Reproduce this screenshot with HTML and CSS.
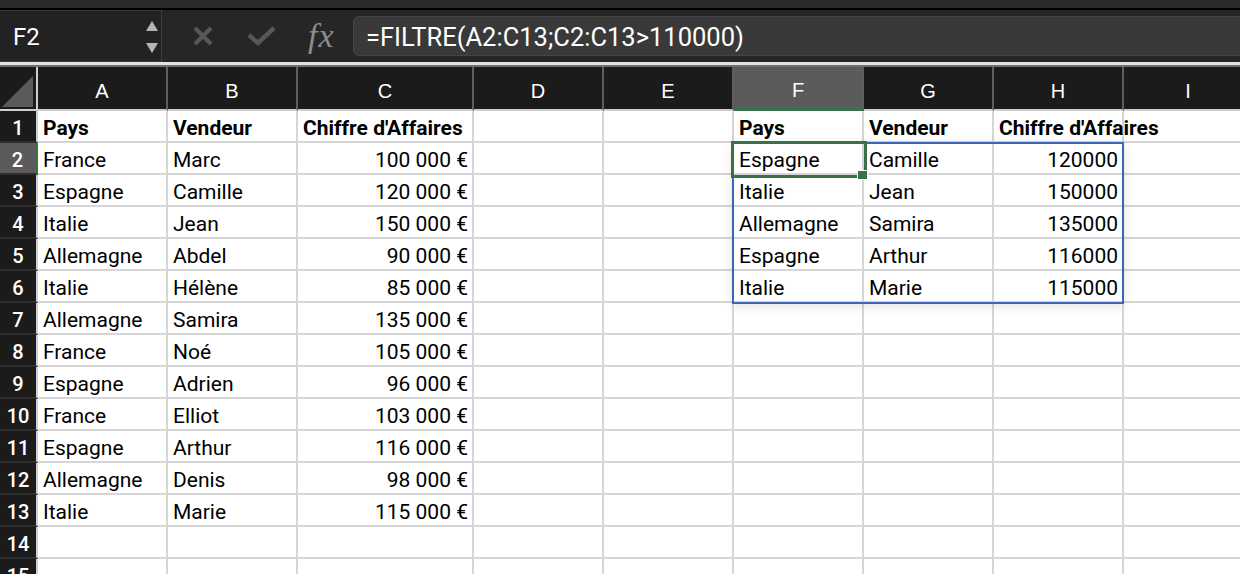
FILE: index.html
```html
<!DOCTYPE html>
<html lang="fr">
<head>
  <meta charset="UTF-8" />
  <title>Classeur - FILTRE</title>
  <link rel="stylesheet" href="styles.css">
</head>
<body>

<!-- TOP STRIP -->
<div class="top-strip"></div>

<!-- FORMULA BAR -->
<div class="formula-bar">
  <div class="name-box">
    <span class="name">F2</span>
    <div class="spinner">
      <svg width="14" height="34" viewBox="0 0 14 34">
        <polygon points="7,1 13,11 1,11" fill="#b5b5b5"/>
        <polygon points="1,23 13,23 7,33" fill="#b5b5b5"/>
      </svg>
    </div>
  </div>
  <div class="bar-icons">
    <svg class="icon-x" width="22" height="20" viewBox="0 0 22 20">
      <path d="M3 2 L19 18 M19 2 L3 18" stroke="#575757" stroke-width="4" stroke-linecap="butt"/>
    </svg>
    <svg class="icon-check" width="30" height="20" viewBox="0 0 30 20">
      <path d="M2 9 L11 17 L27 2" stroke="#575757" stroke-width="4.5" fill="none"/>
    </svg>
    <span class="fx">fx</span>
  </div>
  <div class="formula-input">=FILTRE(A2:C13;C2:C13&gt;110000)</div>
</div>

<div class="bar-sep"></div>

<!-- SHEET -->
<div class="sheet">
  <!-- column headers -->
  <div class="corner"><div class="corner-tri"></div></div>
  <div class="ch">A</div><div class="ch">B</div><div class="ch">C</div><div class="ch">D</div><div class="ch">E</div>
  <div class="ch active">F</div><div class="ch">G</div><div class="ch">H</div><div class="ch">I</div>

  <!-- row 1 -->
  <div class="rh">1</div>
  <div class="c b">Pays</div><div class="c b">Vendeur</div><div class="c b">Chiffre d'Affaires</div><div class="c"></div><div class="c"></div>
  <div class="c b">Pays</div><div class="c b">Vendeur</div><div class="c b">Chiffre d'Affaires</div><div class="c"></div>

  <!-- row 2 -->
  <div class="rh active">2</div>
  <div class="c">France</div><div class="c">Marc</div><div class="c n">100 000 €</div><div class="c"></div><div class="c"></div>
  <div class="c">Espagne</div><div class="c">Camille</div><div class="c n">120000</div><div class="c"></div>

  <!-- row 3 -->
  <div class="rh">3</div>
  <div class="c">Espagne</div><div class="c">Camille</div><div class="c n">120 000 €</div><div class="c"></div><div class="c"></div>
  <div class="c">Italie</div><div class="c">Jean</div><div class="c n">150000</div><div class="c"></div>

  <!-- row 4 -->
  <div class="rh">4</div>
  <div class="c">Italie</div><div class="c">Jean</div><div class="c n">150 000 €</div><div class="c"></div><div class="c"></div>
  <div class="c">Allemagne</div><div class="c">Samira</div><div class="c n">135000</div><div class="c"></div>

  <!-- row 5 -->
  <div class="rh">5</div>
  <div class="c">Allemagne</div><div class="c">Abdel</div><div class="c n">90 000 €</div><div class="c"></div><div class="c"></div>
  <div class="c">Espagne</div><div class="c">Arthur</div><div class="c n">116000</div><div class="c"></div>

  <!-- row 6 -->
  <div class="rh">6</div>
  <div class="c">Italie</div><div class="c">Hélène</div><div class="c n">85 000 €</div><div class="c"></div><div class="c"></div>
  <div class="c">Italie</div><div class="c">Marie</div><div class="c n">115000</div><div class="c"></div>

  <!-- row 7 -->
  <div class="rh">7</div>
  <div class="c">Allemagne</div><div class="c">Samira</div><div class="c n">135 000 €</div><div class="c"></div><div class="c"></div>
  <div class="c"></div><div class="c"></div><div class="c"></div><div class="c"></div>

  <!-- row 8 -->
  <div class="rh">8</div>
  <div class="c">France</div><div class="c">Noé</div><div class="c n">105 000 €</div><div class="c"></div><div class="c"></div>
  <div class="c"></div><div class="c"></div><div class="c"></div><div class="c"></div>

  <!-- row 9 -->
  <div class="rh">9</div>
  <div class="c">Espagne</div><div class="c">Adrien</div><div class="c n">96 000 €</div><div class="c"></div><div class="c"></div>
  <div class="c"></div><div class="c"></div><div class="c"></div><div class="c"></div>

  <!-- row 10 -->
  <div class="rh">10</div>
  <div class="c">France</div><div class="c">Elliot</div><div class="c n">103 000 €</div><div class="c"></div><div class="c"></div>
  <div class="c"></div><div class="c"></div><div class="c"></div><div class="c"></div>

  <!-- row 11 -->
  <div class="rh">11</div>
  <div class="c">Espagne</div><div class="c">Arthur</div><div class="c n">116 000 €</div><div class="c"></div><div class="c"></div>
  <div class="c"></div><div class="c"></div><div class="c"></div><div class="c"></div>

  <!-- row 12 -->
  <div class="rh">12</div>
  <div class="c">Allemagne</div><div class="c">Denis</div><div class="c n">98 000 €</div><div class="c"></div><div class="c"></div>
  <div class="c"></div><div class="c"></div><div class="c"></div><div class="c"></div>

  <!-- row 13 -->
  <div class="rh">13</div>
  <div class="c">Italie</div><div class="c">Marie</div><div class="c n">115 000 €</div><div class="c"></div><div class="c"></div>
  <div class="c"></div><div class="c"></div><div class="c"></div><div class="c"></div>

  <!-- row 14 -->
  <div class="rh">14</div>
  <div class="c"></div><div class="c"></div><div class="c"></div><div class="c"></div><div class="c"></div>
  <div class="c"></div><div class="c"></div><div class="c"></div><div class="c"></div>

  <!-- row 15 -->
  <div class="rh">15</div>
  <div class="c"></div><div class="c"></div><div class="c"></div><div class="c"></div><div class="c"></div>
  <div class="c"></div><div class="c"></div><div class="c"></div><div class="c"></div>

  <!-- overlays: spill range + active cell -->
  <div class="spill"></div>
  <div class="selection"></div>
  <div class="handle"></div>
</div>

</body>
</html>
```

FILE: styles.css
```css
* {
  box-sizing: border-box;
  margin: 0;
  padding: 0;
}
body {
  font-family: Roboto, "Liberation Sans", sans-serif;
  background-color: #fff;
  color: #000;
  width: 1240px;
  height: 574px;
  overflow: hidden;
}

/* TOP STRIP */
.top-strip {
  height: 10px;
  background-color: #2b2b2b;
  border-bottom: 2px solid #000;
}

/* FORMULA BAR */
.formula-bar {
  display: flex;
  align-items: center;
  height: 52px;
  background-color: #262626;
}
.name-box {
  display: flex;
  align-items: center;
  justify-content: space-between;
  width: 162px;
  height: 52px;
  padding: 2px 2px 0 13px;
  background-color: #222;
  border: 1px solid #3c3c3c;
  border-left: none;
}
.name {
  color: #fff;
  font-size: 24px;
}
.spinner svg {
  display: block;
}
.bar-icons {
  display: flex;
  align-items: center;
  padding-left: 30px;
  gap: 34px;
  width: 191px;
}
.icon-check {
  margin-left: -1px;
}
.fx {
  font-family: "Liberation Serif", serif;
  font-style: italic;
  font-size: 34px;
  color: #8d8d8d;
  margin-left: -3px;
  letter-spacing: 1px;
}
.formula-input {
  flex: 1;
  height: 40px;
  margin-right: -10px;
  padding: 1px 0 0 12px;
  line-height: 39px;
  font-size: 25.5px;
  color: #fff;
  background-color: #393939;
  border: 1px solid #454545;
  border-radius: 6px;
}
.bar-sep {
  height: 5px;
  background-color: #e2e2e2;
  border-bottom: 2px solid #6e6e6e;
}

/* SHEET GRID */
.sheet {
  position: relative;
  display: grid;
  grid-template-columns: 38px 130px 130px 176px 130px 130px 130px 130px 130px 130px;
  grid-template-rows: 44px repeat(15, 32px);
  width: 1274px;
}
.corner {
  position: relative;
  background-color: #1b1b1b;
  border-right: 2px solid #cfcfcf;
  border-bottom: 2px solid #cfcfcf;
}
.corner-tri {
  position: absolute;
  left: 2px;
  top: 9px;
  width: 31px;
  height: 31px;
  background-color: #5a5a5a;
  clip-path: polygon(100% 0, 100% 100%, 0 100%);
}
.ch {
  display: flex;
  align-items: center;
  justify-content: center;
  padding-top: 6px;
  font-family: "Liberation Sans", Arial, sans-serif;
  font-size: 20px;
  color: #fff;
  background-color: #1b1b1b;
  border-right: 2px solid #5e5e5e;
  border-bottom: 2px solid #cfcfcf;
}
.ch.active {
  background-color: #5b5b5b;
  border-bottom: 3px solid #39714a;
}
.rh {
  display: flex;
  align-items: center;
  justify-content: center;
  padding-top: 3px;
  font-size: 20px;
  font-weight: 500;
  color: #fff;
  background-color: #1b1b1b;
  border-right: 2px solid #cfcfcf;
  border-bottom: 2px solid #2e2e2e;
}
.rh.active {
  background-color: #5b5b5b;
  border-right: 3px solid #39714a;
}
.c {
  display: flex;
  align-items: flex-end;
  padding: 0 4px 0 5px;
  font-size: 21px;
  line-height: 26px;
  white-space: nowrap;
  overflow: visible;
  border-right: 2px solid #d6d6d6;
  border-bottom: 2px solid #d6d6d6;
}
.c.b {
  font-weight: bold;
}
.c.n {
  justify-content: flex-end;
}

/* OVERLAYS */
.spill {
  position: absolute;
  left: 732px;
  top: 75px;
  width: 392px;
  height: 162px;
  border: 2px solid #3d64b6;
  box-shadow: 0 2px 10px rgba(0, 0, 0, 0.12);
}
.selection {
  position: absolute;
  left: 731px;
  top: 74px;
  width: 136px;
  height: 37px;
  border: 3px solid #39714a;
}
.handle {
  position: absolute;
  left: 857px;
  top: 103px;
  width: 11px;
  height: 10px;
  background-color: #39714a;
  border: 1px solid #fff;
}
```
